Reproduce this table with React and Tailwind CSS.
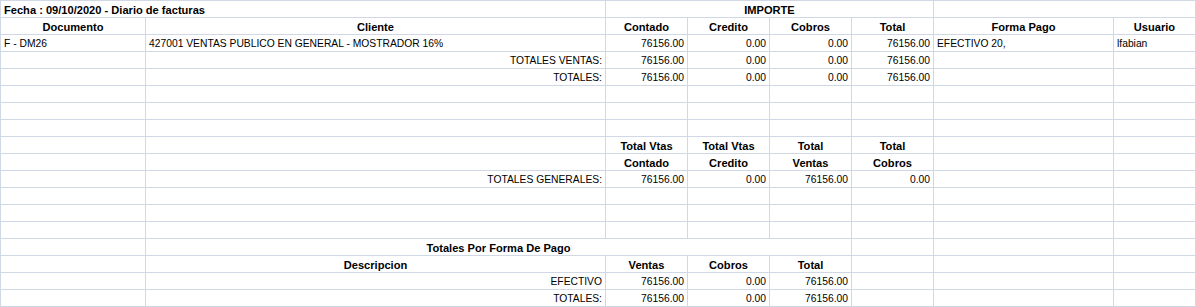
import React from 'react'

// celda: [texto, alineacion, negrita, span]
const H = (t) => [t, 'c', true, 1]
const R = (t) => [t, 'r', false, 1]
const L = (t) => [t, 'l', false, 1]
const E = ['', 'l', false, 1]
const empty = () => [E, E, E, E, E, E, E, E]

const rows = [
  [['Fecha : 09/10/2020 - Diario de facturas', 'l', true, 2], ['IMPORTE', 'c', true, 4], ['', 'l', false, 2]],
  [H('Documento'), H('Cliente'), H('Contado'), H('Credito'), H('Cobros'), H('Total'), H('Forma Pago'), H('Usuario')],
  [L('F - DM26'), L('427001 VENTAS PUBLICO EN GENERAL - MOSTRADOR 16%'), R('76156.00'), R('0.00'), R('0.00'), R('76156.00'), L('EFECTIVO 20,'), L('lfabian')],
  [E, R('TOTALES VENTAS:'), R('76156.00'), R('0.00'), R('0.00'), R('76156.00'), E, E],
  [E, R('TOTALES:'), R('76156.00'), R('0.00'), R('0.00'), R('76156.00'), E, E],
  empty(),
  empty(),
  empty(),
  [E, E, H('Total Vtas'), H('Total Vtas'), H('Total'), H('Total'), E, E],
  [E, E, H('Contado'), H('Credito'), H('Ventas'), H('Cobros'), E, E],
  [E, R('TOTALES GENERALES:'), R('76156.00'), R('0.00'), R('76156.00'), R('0.00'), E, E],
  empty(),
  empty(),
  empty(),
  [E, ['Totales Por Forma De Pago', 'c', true, 4], E, E, E],
  [E, H('Descripcion'), H('Ventas'), H('Cobros'), H('Total'), E, E, E],
  [E, R('EFECTIVO'), R('76156.00'), R('0.00'), R('76156.00'), E, E, E],
  [E, R('TOTALES:'), R('76156.00'), R('0.00'), R('76156.00'), E, E, E],
]

const alignClass = { l: 'text-left', c: 'text-center', r: 'text-right' }
const spanClass = { 1: 'col-span-1', 2: 'col-span-2', 4: 'col-span-4' }

export default function App() {
  return (
    <div
      className="w-[1196px] h-[307px] bg-white overflow-hidden text-black"
      style={{ fontFamily: '"Liberation Sans", Arial, sans-serif' }}
    >
      <div className="grid grid-cols-[145px_460px_82px_82px_82px_82px_180px_82px] auto-rows-[17px] border-l border-t border-[#d0d7e5] w-[1196px]">
        {rows.map((row, i) =>
          row.map(([t, a, b, s], j) => (
            <div
              key={i + '-' + j}
              className={`${spanClass[s]} ${alignClass[a]} ${b ? 'font-bold text-[11.1px]' : 'text-[10.3px]'} border-r border-b border-[#d0d7e5] pl-[3px] pr-[3px] pt-px leading-[16px] whitespace-nowrap overflow-hidden`}
            >
              {t}
            </div>
          ))
        )}
      </div>
    </div>
  )
}
